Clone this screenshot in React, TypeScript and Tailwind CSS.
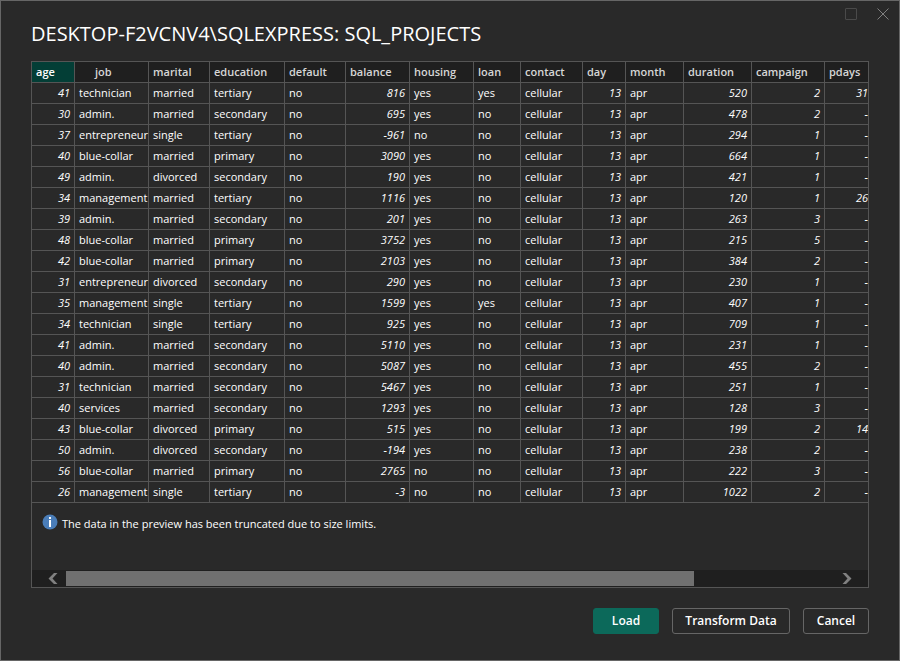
import React from "react";

type Column = {
  name: string;
  width: string;
  numeric?: boolean;
};

const columns: Column[] = [
  { name: "age", width: "w-[43px]", numeric: true },
  { name: "job", width: "w-[74px]" },
  { name: "marital", width: "w-[61px]" },
  { name: "education", width: "w-[75px]" },
  { name: "default", width: "w-[61px]" },
  { name: "balance", width: "w-[64px]", numeric: true },
  { name: "housing", width: "w-[64px]" },
  { name: "loan", width: "w-[47px]" },
  { name: "contact", width: "w-[62px]" },
  { name: "day", width: "w-[43px]", numeric: true },
  { name: "month", width: "w-[58px]" },
  { name: "duration", width: "w-[68px]", numeric: true },
  { name: "campaign", width: "w-[73px]", numeric: true },
  { name: "pdays", width: "w-auto", numeric: true },
];

const rows: (string | number)[][] = [
  [41, "technician", "married", "tertiary", "no", 816, "yes", "yes", "cellular", 13, "apr", 520, 2, 31],
  [30, "admin.", "married", "secondary", "no", 695, "yes", "no", "cellular", 13, "apr", 478, 2, "-"],
  [37, "entrepreneur", "single", "tertiary", "no", -961, "no", "no", "cellular", 13, "apr", 294, 1, "-"],
  [40, "blue-collar", "married", "primary", "no", 3090, "yes", "no", "cellular", 13, "apr", 664, 1, "-"],
  [49, "admin.", "divorced", "secondary", "no", 190, "yes", "no", "cellular", 13, "apr", 421, 1, "-"],
  [34, "management", "married", "tertiary", "no", 1116, "yes", "no", "cellular", 13, "apr", 120, 1, 26],
  [39, "admin.", "married", "secondary", "no", 201, "yes", "no", "cellular", 13, "apr", 263, 3, "-"],
  [48, "blue-collar", "married", "primary", "no", 3752, "yes", "no", "cellular", 13, "apr", 215, 5, "-"],
  [42, "blue-collar", "married", "primary", "no", 2103, "yes", "no", "cellular", 13, "apr", 384, 2, "-"],
  [31, "entrepreneur", "divorced", "secondary", "no", 290, "yes", "no", "cellular", 13, "apr", 230, 1, "-"],
  [35, "management", "single", "tertiary", "no", 1599, "yes", "yes", "cellular", 13, "apr", 407, 1, "-"],
  [34, "technician", "single", "tertiary", "no", 925, "yes", "no", "cellular", 13, "apr", 709, 1, "-"],
  [41, "admin.", "married", "secondary", "no", 5110, "yes", "no", "cellular", 13, "apr", 231, 1, "-"],
  [40, "admin.", "married", "secondary", "no", 5087, "yes", "no", "cellular", 13, "apr", 455, 2, "-"],
  [31, "technician", "married", "secondary", "no", 5467, "yes", "no", "cellular", 13, "apr", 251, 1, "-"],
  [40, "services", "married", "secondary", "no", 1293, "yes", "no", "cellular", 13, "apr", 128, 3, "-"],
  [43, "blue-collar", "divorced", "primary", "no", 515, "yes", "no", "cellular", 13, "apr", 199, 2, 14],
  [50, "admin.", "divorced", "secondary", "no", -194, "yes", "no", "cellular", 13, "apr", 238, 2, "-"],
  [56, "blue-collar", "married", "primary", "no", 2765, "no", "no", "cellular", 13, "apr", 222, 3, "-"],
  [26, "management", "single", "tertiary", "no", -3, "no", "no", "cellular", 13, "apr", 1022, 2, "-"],
];

function headerClass(name: string) {
  if (name === "age") return "bg-[#033e36] pl-1 text-white";
  if (name === "job") return "bg-[#1f1f1f] pl-5 text-[#d6d6d6]";
  return "bg-[#1f1f1f] pl-1 text-[#d6d6d6]";
}

function WindowControls() {
  return (
    <div className="flex h-[23px] items-end justify-end gap-3 pr-1.5">
      <button type="button" aria-label="Maximize" className="flex size-5 items-center justify-center" disabled>
        <svg width="12" height="12" viewBox="0 0 12 12" fill="none" stroke="#4a4a4a">
          <rect x="0.5" y="0.5" width="11" height="11" rx="0.5" />
        </svg>
      </button>
      <button type="button" aria-label="Close" className="flex size-5 items-center justify-center">
        <svg width="12" height="12" viewBox="0 0 12 12" fill="none" stroke="#808080">
          <path d="M0.5 0.5 11.5 11.5M11.5 0.5 0.5 11.5" />
        </svg>
      </button>
    </div>
  );
}

function PreviewTable() {
  return (
    <div className="overflow-x-auto">
      <table className="w-full min-w-[836px] table-fixed border-separate border-spacing-0 text-[11px] leading-5">
        <thead>
          <tr>
            {columns.map((c) => (
              <th
                key={c.name}
                scope="col"
                className={`h-[21px] border-r border-b border-[#555555] p-0 text-left font-semibold last:border-r-0 ${c.width} ${headerClass(c.name)}`}
              >
                {c.name}
              </th>
            ))}
          </tr>
        </thead>
        <tbody>
          {rows.map((row, r) => (
            <tr key={r}>
              {row.map((value, i) => (
                <td
                  key={columns[i].name}
                  className={`h-[21px] border-r border-b border-[#555555] px-1 py-0 whitespace-nowrap last:border-r-0 last:pr-0 ${
                    columns[i].numeric ? "text-right italic" : "text-left"
                  }`}
                >
                  {value}
                </td>
              ))}
            </tr>
          ))}
        </tbody>
      </table>
    </div>
  );
}

function ScrollBar() {
  return (
    <div className="mt-auto flex h-[17px] items-center bg-[#1f1f1f] px-4">
      <button type="button" aria-label="Scroll left" className="flex w-[18px] shrink-0">
        <svg width="10" height="11" viewBox="0 0 10 11" fill="#808080">
          <path d="M6 0H9.5L4.5 5.5 9.5 11H6L0.5 5.5Z" />
        </svg>
      </button>
      <div className="h-[15px] flex-1">
        <div className="h-full w-[82%] bg-[#707070]" />
      </div>
      <button type="button" aria-label="Scroll right" className="flex w-5 shrink-0 justify-end">
        <svg width="10" height="11" viewBox="0 0 10 11" fill="#808080">
          <path d="M4 0H0.5L5.5 5.5 0.5 11H4L9.5 5.5Z" />
        </svg>
      </button>
    </div>
  );
}

export default function App() {
  return (
    <main className="flex min-h-screen flex-col border border-[#666666] bg-[#292929] font-['Open_Sans','Noto_Sans',sans-serif] text-white">
      <WindowControls />
      <div className="flex flex-1 flex-col px-[30px] pb-[26px]">
        <h1 className="pb-[17px] text-[20px] leading-5 font-medium">
          DESKTOP-F2VCNV4\SQLEXPRESS: SQL_PROJECTS
        </h1>
        <section aria-label="Data preview" className="flex flex-1 flex-col overflow-hidden border border-[#555555]">
          <PreviewTable />
          <p className="flex items-start gap-1 px-[10px] pt-[11px] pb-6 text-[11px] leading-5">
            <svg width="16" height="16" viewBox="0 0 16 16" className="shrink-0">
              <circle cx="8" cy="8" r="7.5" fill="#4a7db8" />
              <rect x="7" y="3" width="2" height="2" fill="#fff" />
              <rect x="7" y="6" width="2" height="7" fill="#fff" />
            </svg>
            The data in the preview has been truncated due to size limits.
          </p>
          <ScrollBar />
        </section>
        <div className="flex justify-end gap-[13px] pt-5 text-[12px] leading-6 font-semibold">
          <button type="button" className="h-[26px] w-[66px] rounded-[3px] border border-[#0c695a] bg-[#0c695a]">
            Load
          </button>
          <button type="button" className="h-[26px] w-[118px] rounded-[3px] border border-[#666666]">
            Transform Data
          </button>
          <button type="button" className="h-[26px] w-[66px] rounded-[3px] border border-[#666666]">
            Cancel
          </button>
        </div>
      </div>
    </main>
  );
}
